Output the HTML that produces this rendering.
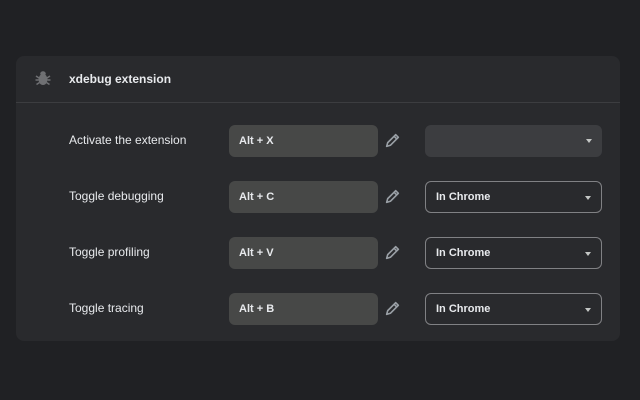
<!DOCTYPE html>
<html><head><style>
body{margin:0;width:640px;height:400px;background:#202124;font-family:"Liberation Sans",sans-serif;position:relative;overflow:hidden}
.card{position:absolute;left:16px;top:56px;width:604px;height:285px;background:#292a2d;border-radius:8px}
.hdr{position:absolute;left:0;top:0;width:604px;height:46px;border-bottom:1px solid #3c3d40}
.title{position:absolute;left:53px;top:16px;color:#e8eaed;font-size:12px;font-weight:bold}
.lbl{position:absolute;left:69px;color:#e8eaed;font-size:12px}
.inp{position:absolute;left:229px;width:149px;height:32px;background:#474847;border-radius:6px;color:#e8eaed;font-size:11px;font-weight:bold;line-height:32px;box-sizing:border-box;padding-left:10px}
.sel{position:absolute;left:425px;width:177px;height:32px;border-radius:6px;color:#e8eaed;font-size:11px;font-weight:bold;line-height:30px;box-sizing:border-box;padding-left:10px;border:1px solid #808184}
.sel.dis{background:#3c3d40;border:none}
.sel:after{content:"";position:absolute;right:10px;top:14px;border-left:3.5px solid transparent;border-right:3.5px solid transparent;border-top:4px solid #c4c7c5}
.pen{position:absolute;left:384px}
</style></head><body>
<div class="card"><div class="hdr">
<svg style="position:absolute;left:18px;top:13px" width="18" height="18" viewBox="0 0 18 18"><g fill="#6f7073"><ellipse cx="9" cy="10.5" rx="4.5" ry="5.5"/><ellipse cx="9" cy="4.5" rx="2.8" ry="2.2"/></g><g stroke="#6f7073" stroke-width="1.5"><path d="M2 7l3 2M16 7l-3 2M1.5 11h3M16.5 11h-3M2.5 15.5l3-2M15.5 15.5l-3-2"/></g></svg>
<div class="title">xdebug extension</div></div></div>
<div class="lbl" style="top:133px">Activate the extension</div>
<div class="lbl" style="top:189px">Toggle debugging</div>
<div class="lbl" style="top:245px">Toggle profiling</div>
<div class="lbl" style="top:301px">Toggle tracing</div>
<div class="inp" style="top:125px">Alt + X</div>
<div class="inp" style="top:181px">Alt + C</div>
<div class="inp" style="top:237px">Alt + V</div>
<div class="inp" style="top:293px">Alt + B</div>
<svg class="pen" style="top:132px" width="17" height="17" viewBox="0 0 16 16"><path d="M2.5 13.5l1-3.5 7.5-7.5 2.5 2.5-7.5 7.5z M9.5 4l2.5 2.5" fill="none" stroke="#9aa0a6" stroke-width="1.5" stroke-linejoin="round"/></svg>
<svg class="pen" style="top:188px" width="17" height="17" viewBox="0 0 16 16"><path d="M2.5 13.5l1-3.5 7.5-7.5 2.5 2.5-7.5 7.5z M9.5 4l2.5 2.5" fill="none" stroke="#9aa0a6" stroke-width="1.5" stroke-linejoin="round"/></svg>
<svg class="pen" style="top:244px" width="17" height="17" viewBox="0 0 16 16"><path d="M2.5 13.5l1-3.5 7.5-7.5 2.5 2.5-7.5 7.5z M9.5 4l2.5 2.5" fill="none" stroke="#9aa0a6" stroke-width="1.5" stroke-linejoin="round"/></svg>
<svg class="pen" style="top:300px" width="17" height="17" viewBox="0 0 16 16"><path d="M2.5 13.5l1-3.5 7.5-7.5 2.5 2.5-7.5 7.5z M9.5 4l2.5 2.5" fill="none" stroke="#9aa0a6" stroke-width="1.5" stroke-linejoin="round"/></svg>
<div class="sel dis" style="top:125px"></div>
<div class="sel" style="top:181px">In Chrome</div>
<div class="sel" style="top:237px">In Chrome</div>
<div class="sel" style="top:293px">In Chrome</div>
</body></html>
